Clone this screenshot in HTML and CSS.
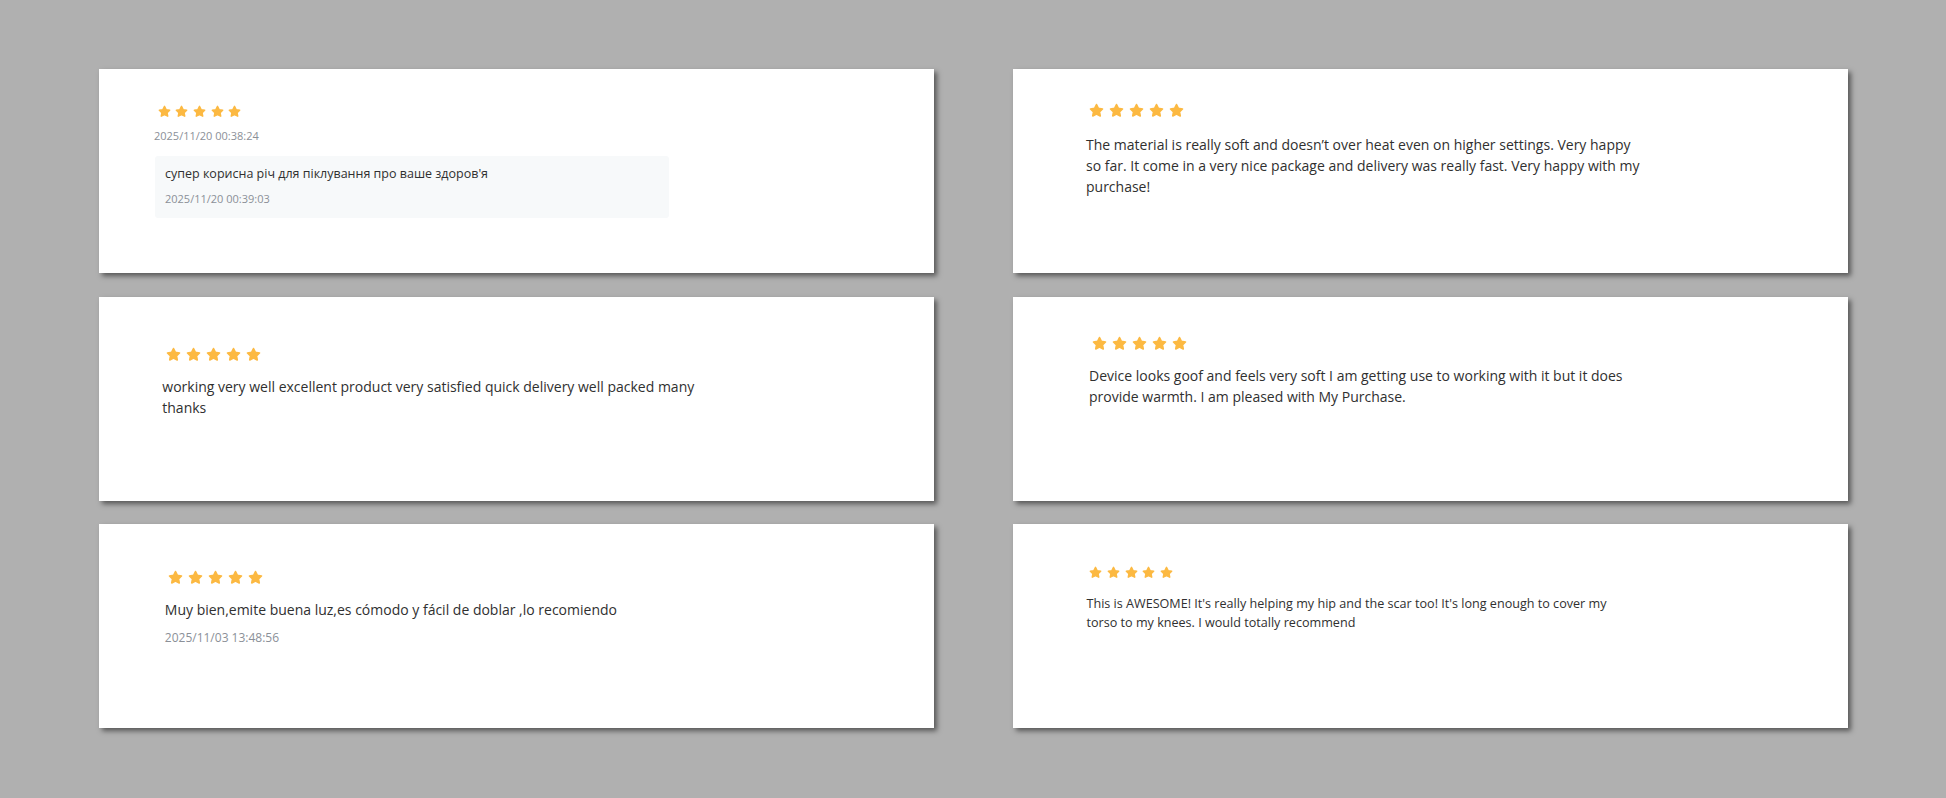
FILE: index.html
```html
<!DOCTYPE html>
<html lang="en">
<head>
<meta charset="utf-8">
<title>Reviews</title>
<link rel="stylesheet" href="styles.css">
</head>
<body>
<main class="grid">
  <section class="card c1">
    <div class="stars">
      <svg viewBox="0 0 24 24"><polygon points="12,2.5 15,8.6 21.6,9.5 16.8,14.1 18,20.7 12,17.6 6,20.7 7.2,14.1 2.4,9.5 9,8.6"/></svg>
      <svg viewBox="0 0 24 24"><polygon points="12,2.5 15,8.6 21.6,9.5 16.8,14.1 18,20.7 12,17.6 6,20.7 7.2,14.1 2.4,9.5 9,8.6"/></svg>
      <svg viewBox="0 0 24 24"><polygon points="12,2.5 15,8.6 21.6,9.5 16.8,14.1 18,20.7 12,17.6 6,20.7 7.2,14.1 2.4,9.5 9,8.6"/></svg>
      <svg viewBox="0 0 24 24"><polygon points="12,2.5 15,8.6 21.6,9.5 16.8,14.1 18,20.7 12,17.6 6,20.7 7.2,14.1 2.4,9.5 9,8.6"/></svg>
      <svg viewBox="0 0 24 24"><polygon points="12,2.5 15,8.6 21.6,9.5 16.8,14.1 18,20.7 12,17.6 6,20.7 7.2,14.1 2.4,9.5 9,8.6"/></svg>
    </div>
    <p class="date">2025/11/20 00:38:24</p>
    <div class="reply">
      <p class="reply-text">супер корисна річ для піклування про ваше здоров'я</p>
      <p class="date reply-date">2025/11/20 00:39:03</p>
    </div>
  </section>

  <section class="card c2">
    <div class="stars">
      <svg viewBox="0 0 24 24"><polygon points="12,2.5 15,8.6 21.6,9.5 16.8,14.1 18,20.7 12,17.6 6,20.7 7.2,14.1 2.4,9.5 9,8.6"/></svg>
      <svg viewBox="0 0 24 24"><polygon points="12,2.5 15,8.6 21.6,9.5 16.8,14.1 18,20.7 12,17.6 6,20.7 7.2,14.1 2.4,9.5 9,8.6"/></svg>
      <svg viewBox="0 0 24 24"><polygon points="12,2.5 15,8.6 21.6,9.5 16.8,14.1 18,20.7 12,17.6 6,20.7 7.2,14.1 2.4,9.5 9,8.6"/></svg>
      <svg viewBox="0 0 24 24"><polygon points="12,2.5 15,8.6 21.6,9.5 16.8,14.1 18,20.7 12,17.6 6,20.7 7.2,14.1 2.4,9.5 9,8.6"/></svg>
      <svg viewBox="0 0 24 24"><polygon points="12,2.5 15,8.6 21.6,9.5 16.8,14.1 18,20.7 12,17.6 6,20.7 7.2,14.1 2.4,9.5 9,8.6"/></svg>
    </div>
    <p class="text">The material is really soft and doesn’t over heat even on higher settings. Very happy so far. It come in a very nice package and delivery was really fast. Very happy with my purchase!</p>
  </section>

  <section class="card c3">
    <div class="stars">
      <svg viewBox="0 0 24 24"><polygon points="12,2.5 15,8.6 21.6,9.5 16.8,14.1 18,20.7 12,17.6 6,20.7 7.2,14.1 2.4,9.5 9,8.6"/></svg>
      <svg viewBox="0 0 24 24"><polygon points="12,2.5 15,8.6 21.6,9.5 16.8,14.1 18,20.7 12,17.6 6,20.7 7.2,14.1 2.4,9.5 9,8.6"/></svg>
      <svg viewBox="0 0 24 24"><polygon points="12,2.5 15,8.6 21.6,9.5 16.8,14.1 18,20.7 12,17.6 6,20.7 7.2,14.1 2.4,9.5 9,8.6"/></svg>
      <svg viewBox="0 0 24 24"><polygon points="12,2.5 15,8.6 21.6,9.5 16.8,14.1 18,20.7 12,17.6 6,20.7 7.2,14.1 2.4,9.5 9,8.6"/></svg>
      <svg viewBox="0 0 24 24"><polygon points="12,2.5 15,8.6 21.6,9.5 16.8,14.1 18,20.7 12,17.6 6,20.7 7.2,14.1 2.4,9.5 9,8.6"/></svg>
    </div>
    <p class="text">working very well excellent product very satisfied quick delivery well packed many thanks</p>
  </section>

  <section class="card c4">
    <div class="stars">
      <svg viewBox="0 0 24 24"><polygon points="12,2.5 15,8.6 21.6,9.5 16.8,14.1 18,20.7 12,17.6 6,20.7 7.2,14.1 2.4,9.5 9,8.6"/></svg>
      <svg viewBox="0 0 24 24"><polygon points="12,2.5 15,8.6 21.6,9.5 16.8,14.1 18,20.7 12,17.6 6,20.7 7.2,14.1 2.4,9.5 9,8.6"/></svg>
      <svg viewBox="0 0 24 24"><polygon points="12,2.5 15,8.6 21.6,9.5 16.8,14.1 18,20.7 12,17.6 6,20.7 7.2,14.1 2.4,9.5 9,8.6"/></svg>
      <svg viewBox="0 0 24 24"><polygon points="12,2.5 15,8.6 21.6,9.5 16.8,14.1 18,20.7 12,17.6 6,20.7 7.2,14.1 2.4,9.5 9,8.6"/></svg>
      <svg viewBox="0 0 24 24"><polygon points="12,2.5 15,8.6 21.6,9.5 16.8,14.1 18,20.7 12,17.6 6,20.7 7.2,14.1 2.4,9.5 9,8.6"/></svg>
    </div>
    <p class="text">Device looks goof and feels very soft I am getting use to working with it but it does provide warmth. I am pleased with My Purchase.</p>
  </section>

  <section class="card c5">
    <div class="stars">
      <svg viewBox="0 0 24 24"><polygon points="12,2.5 15,8.6 21.6,9.5 16.8,14.1 18,20.7 12,17.6 6,20.7 7.2,14.1 2.4,9.5 9,8.6"/></svg>
      <svg viewBox="0 0 24 24"><polygon points="12,2.5 15,8.6 21.6,9.5 16.8,14.1 18,20.7 12,17.6 6,20.7 7.2,14.1 2.4,9.5 9,8.6"/></svg>
      <svg viewBox="0 0 24 24"><polygon points="12,2.5 15,8.6 21.6,9.5 16.8,14.1 18,20.7 12,17.6 6,20.7 7.2,14.1 2.4,9.5 9,8.6"/></svg>
      <svg viewBox="0 0 24 24"><polygon points="12,2.5 15,8.6 21.6,9.5 16.8,14.1 18,20.7 12,17.6 6,20.7 7.2,14.1 2.4,9.5 9,8.6"/></svg>
      <svg viewBox="0 0 24 24"><polygon points="12,2.5 15,8.6 21.6,9.5 16.8,14.1 18,20.7 12,17.6 6,20.7 7.2,14.1 2.4,9.5 9,8.6"/></svg>
    </div>
    <p class="text">Muy bien,emite buena luz,es cómodo y fácil de doblar ,lo recomiendo</p>
    <p class="date date-lg">2025/11/03 13:48:56</p>
  </section>

  <section class="card c6">
    <div class="stars">
      <svg viewBox="0 0 24 24"><polygon points="12,2.5 15,8.6 21.6,9.5 16.8,14.1 18,20.7 12,17.6 6,20.7 7.2,14.1 2.4,9.5 9,8.6"/></svg>
      <svg viewBox="0 0 24 24"><polygon points="12,2.5 15,8.6 21.6,9.5 16.8,14.1 18,20.7 12,17.6 6,20.7 7.2,14.1 2.4,9.5 9,8.6"/></svg>
      <svg viewBox="0 0 24 24"><polygon points="12,2.5 15,8.6 21.6,9.5 16.8,14.1 18,20.7 12,17.6 6,20.7 7.2,14.1 2.4,9.5 9,8.6"/></svg>
      <svg viewBox="0 0 24 24"><polygon points="12,2.5 15,8.6 21.6,9.5 16.8,14.1 18,20.7 12,17.6 6,20.7 7.2,14.1 2.4,9.5 9,8.6"/></svg>
      <svg viewBox="0 0 24 24"><polygon points="12,2.5 15,8.6 21.6,9.5 16.8,14.1 18,20.7 12,17.6 6,20.7 7.2,14.1 2.4,9.5 9,8.6"/></svg>
    </div>
    <p class="text text-sm">This is AWESOME! It's really helping my hip and the scar too! It's long enough to cover my torso to my knees. I would totally recommend</p>
  </section>
</main>
</body>
</html>
```
FILE: styles.css
```css
* { box-sizing: border-box; }
html, body { margin: 0; padding: 0; }
body {
  background: #b0b0b0;
  font-family: "Open Sans", "Noto Sans", sans-serif;
  color: #333;
  width: 1946px;
  height: 798px;
  overflow: hidden;
}
p { margin: 0; }

.grid {
  display: grid;
  grid-template-columns: 835px 835px;
  grid-auto-rows: 204px;
  column-gap: 78.5px;
  row-gap: 23.5px;
  padding: 69px 0 0 99px;
}
.card {
  background: #fff;
  box-shadow: 3px 3px 5px rgba(0, 0, 0, 0.5);
  display: flex;
  flex-direction: column;
  align-items: flex-start;
}

/* stars */
.stars { display: flex; gap: 5px; }
.stars svg { width: 15px; height: 15px; display: block; }
.stars polygon {
  fill: #fcb942;
  stroke: #fcb942;
  stroke-width: 2.6;
  stroke-linejoin: round;
}
.c1 .stars, .c6 .stars { gap: 4.7px; }
.c1 .stars svg, .c6 .stars svg { width: 13px; height: 13px; }

/* texts */
.text {
  font-size: 14px;
  line-height: 21px;
  color: #303030;
}
.text-sm {
  font-size: 12.6px;
  line-height: 19px;
}
.date {
  font-size: 11px;
  line-height: 16px;
  color: #8b9098;
}
.date-lg {
  font-size: 12px;
  line-height: 17px;
}

/* card 1 */
.c1 { padding: 36px 0 0 55px; }
.c1 .stars { margin-left: 3.6px; }
.c1 > .date { margin-top: 9.5px; }
.reply {
  margin: 12px 0 0 1px;
  width: 514px;
  background: #f7f9fa;
  border-radius: 3px;
  padding: 8px 10px 11px;
}
.reply-text {
  font-size: 12.5px;
  line-height: 20px;
  color: #303030;
  white-space: nowrap;
}
.reply-date { margin-top: 7.5px; }

/* card 2 */
.c2 { padding: 33.5px 0 0 73.5px; }
.c2 .stars { margin-left: 3.3px; }
.c2 .text { margin-top: 16px; width: 556px; }

/* card 3 */
.c3 { padding: 50px 0 0 63.3px; }
.c3 .stars { margin-left: 3.4px; }
.c3 .text { margin-top: 14px; width: 555px; }

/* card 4 */
.c4 { padding: 39px 0 0 76.5px; }
.c4 .stars { margin-left: 3.3px; }
.c4 .text { margin-top: 14px; width: 555px; }

/* card 5 */
.c5 { padding: 45.5px 0 0 65.8px; }
.c5 .stars { margin-left: 3.2px; }
.c5 .text { margin-top: 14.5px; }
.c5 .date { margin-top: 9.3px; }

/* card 6 */
.c6 { padding: 42px 0 0 74px; }
.c6 .stars { margin-left: 2.9px; }
.c6 .text { margin-top: 14.5px; width: 535px; }
```
